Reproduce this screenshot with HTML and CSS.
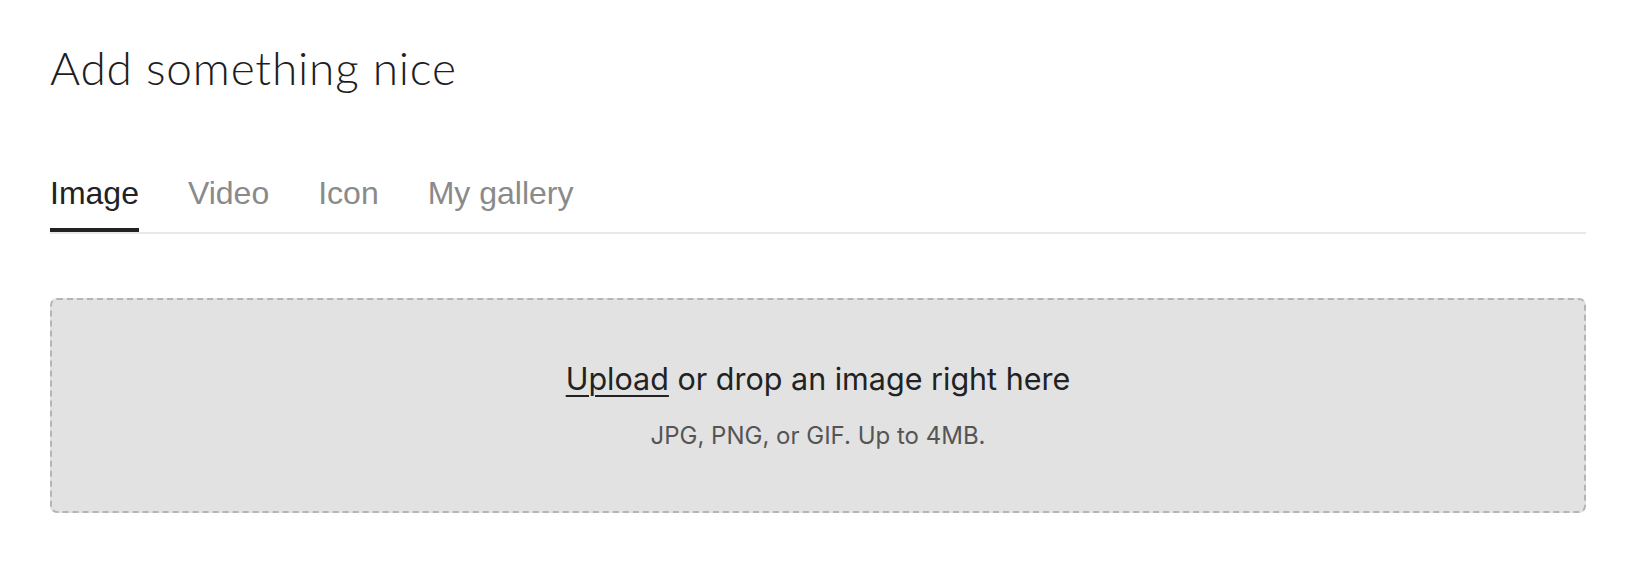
FILE: index.html
```html
<!DOCTYPE html>
<html lang="en">
<head>
  <meta charset="UTF-8">
  <meta name="viewport" content="width=device-width, initial-scale=1.0">
  <title>Add something nice</title>
  <link rel="stylesheet" href="styles.css">
</head>
<body>
<div id="picker">
  <h1 class="title">Add something nice</h1>
  <div class="tabs">
    <div class="tab active">Image</div>
    <div class="tab">Video</div>
    <div class="tab">Icon</div>
    <div class="tab">My gallery</div>
  </div>
  <div class="dropzone">
    <div class="drop-main"><span class="upload-link">Upload</span> or drop an image right here</div>
    <div class="drop-hint">JPG, PNG, or GIF. Up to 4MB.</div>
  </div>
</div>
</body>
</html>
```

FILE: styles.css
```css
body {
  margin: 0;
  background-color: #fff;
  font-family: "Liberation Sans", Arial, sans-serif;
  color: #222;
}
#picker {
  width: 1536px;
  padding: 0 50px;
}
.title {
  margin: 40px 0 0;
  font-family: Lato, "Liberation Sans", sans-serif;
  font-size: 46px;
  line-height: 56px;
  font-weight: 300;
  letter-spacing: 0.8px;
  color: #1e1e1e;
}
.tabs {
  display: flex;
  gap: 49px;
  margin-top: 78px;
  border-bottom: 2px solid #e8e8e8;
}
.tab {
  font-size: 32px;
  line-height: 38px;
  padding-bottom: 16px;
  color: #8a8a8a;
  border-bottom: 4px solid transparent;
  cursor: pointer;
}
.tab.active {
  color: #222;
  border-bottom-color: #222;
}
.dropzone {
  margin-top: 64px;
  height: 211px;
  background-color: #e2e2e2;
  border: 2px dashed #b5b5b5;
  border-radius: 7px;
  display: flex;
  flex-direction: column;
  align-items: center;
  justify-content: center;
  font-family: Inter, "Noto Sans", sans-serif;
}
.drop-main {
  font-size: 30.5px;
  line-height: 36px;
  color: #222;
}
.upload-link {
  text-decoration: underline;
  text-underline-offset: 5px;
  text-decoration-thickness: 2px;
  cursor: pointer;
}
.drop-hint {
  margin-top: 25px;
  font-size: 24px;
  line-height: 28px;
  color: #555;
}
```
